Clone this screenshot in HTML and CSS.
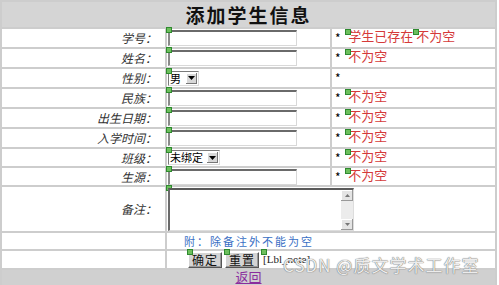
FILE: index.html
```html
<!DOCTYPE html>
<html>
<head>
<meta charset="utf-8">
<link rel="stylesheet" href="styles.css">
</head>
<body>
<div class="page">
<table class="form">
  <tr class="r-title"><td colspan="3" class="title">添加学生信息</td></tr>
  <tr class="r"><td class="lbl">学号：</td><td class="fld"><span class="wrap"><i class="mk"></i><span class="txt"></span></span></td><td class="msg">* <span class="err"><i class="mk2"></i>学生已存在<i class="mk2"></i>不为空</span></td></tr>
  <tr class="r"><td class="lbl">姓名：</td><td class="fld"><span class="wrap"><i class="mk"></i><span class="txt"></span></span></td><td class="msg">* <span class="err"><i class="mk2"></i>不为空</span></td></tr>
  <tr class="r"><td class="lbl">性别：</td><td class="fld"><span class="wrap"><i class="mk"></i><span class="sel sel-s"><span class="sv">男</span><span class="arr"><svg width="7" height="4" viewBox="0 0 7 4"><path d="M0 0h7L3.5 4z" fill="#000"/></svg></span></span></span></td><td class="msg">*</td></tr>
  <tr class="r"><td class="lbl">民族：</td><td class="fld"><span class="wrap"><i class="mk"></i><span class="txt"></span></span></td><td class="msg">* <span class="err"><i class="mk2"></i>不为空</span></td></tr>
  <tr class="r"><td class="lbl">出生日期：</td><td class="fld"><span class="wrap"><i class="mk"></i><span class="txt"></span></span></td><td class="msg">* <span class="err"><i class="mk2"></i>不为空</span></td></tr>
  <tr class="r"><td class="lbl">入学时间：</td><td class="fld"><span class="wrap"><i class="mk"></i><span class="txt"></span></span></td><td class="msg">* <span class="err"><i class="mk2"></i>不为空</span></td></tr>
  <tr class="r r-s"><td class="lbl">班级：</td><td class="fld"><span class="wrap"><i class="mk"></i><span class="sel sel-l"><span class="sv">未绑定</span><span class="arr"><svg width="7" height="4" viewBox="0 0 7 4"><path d="M0 0h7L3.5 4z" fill="#000"/></svg></span></span></span></td><td class="msg">* <span class="err"><i class="mk2"></i>不为空</span></td></tr>
  <tr class="r r-s"><td class="lbl">生源：</td><td class="fld"><span class="wrap"><i class="mk"></i><span class="txt"></span></span></td><td class="msg">* <span class="err"><i class="mk2"></i>不为空</span></td></tr>
  <tr class="r-area"><td class="lbl">备注：</td><td colspan="2" class="fld"><span class="wrap"><i class="mk"></i><span class="area"><span class="sb"><span class="sbtn"><svg width="5" height="3" viewBox="0 0 5 3"><path d="M0 3h5L2.5 0z" fill="#777"/></svg></span><span class="strack"></span><span class="sbtn"><svg width="5" height="3" viewBox="0 0 5 3"><path d="M0 0h5L2.5 3z" fill="#777"/></svg></span></span></span></span></td></tr>
  <tr class="r-note"><td></td><td colspan="2" class="note">附：除备注外不能为空</td></tr>
  <tr class="r-btn"><td></td><td colspan="2" class="btns"><span class="wrap"><i class="mk"></i><span class="btn">确定</span></span><span class="wrap"><i class="mk"></i><span class="btn">重置</span></span><span class="wrap"><i class="mk"></i><span class="lblnote">[Lbl_note]</span></span></td></tr>
  <tr class="r-back"><td colspan="3" class="back"><a class="lnk">返回</a></td></tr>
</table>
<div class="wm">CSDN @质文学术工作室</div>
</div>
</body>
</html>
```
FILE: styles.css
```css
html, body { margin: 0; padding: 0; background: #fff; }
.page { position: relative; width: 499px; height: 285px; overflow: hidden; font-family: "Noto Sans CJK SC", sans-serif; }
.form { width: 497px; border-collapse: separate; border-spacing: 2px; background: #cdcdcd; table-layout: fixed; }
.form td { padding: 0; background: #fff; vertical-align: middle; font-size: 12px; line-height: 12px; overflow: visible; }
.r-title td.title { background: #d5d5d5; height: 25px; text-align: center; font-family: "Noto Sans CJK SC", serif; font-weight: bold; font-size: 19px; line-height: 25px; color: #111; letter-spacing: 2px; }
.r td { height: 18px; }
.r-s td { height: 17px; }
.r-area td { height: 44px; }
.r-note td { height: 16px; }
.r-btn td { height: 17px; }
.r-back td.back { background: #d0d0d0; height: 16px; text-align: center; vertical-align: top; }
.lbl { text-align: right; font-style: italic; color: #333; padding-right: 8px !important; box-sizing: border-box; }
.form tr td:first-child { width: 160px; }
.fld { width: 167px; font-size: 0 !important; line-height: 0 !important; }
.wrap { position: relative; display: inline-block; vertical-align: middle; }
.mk { position: absolute; left: -1px; top: -3px; width: 4px; height: 4px; background: #6cbf5c; border: 1px solid #2f8a2f; }
.mk2 { display: inline-block; position: relative; width: 3px; height: 0; vertical-align: baseline; }
.mk2::before { content: ""; position: absolute; left: 0; top: -12px; width: 4px; height: 4px; background: #6cbf5c; border: 1px solid #2f8a2f; }
.txt { display: block; margin-left: 1px; width: 126px; height: 13px; border-top: 2px solid #6a6a6a; border-left: 2px solid #8a8a8a; border-right: 1px solid #d8d8d8; border-bottom: 1px solid #d8d8d8; background: #fff; }
.sel { display: flex; margin-left: 1px; height: 13px; border: 1px solid #7a7a7a; border-right-color: #ddd; border-bottom-color: #ddd; background: #fff; font-size: 11px; line-height: 13px; color: #000; }
.sel-s { width: 29px; }
.sel-l { width: 50px; }
.sv { flex: 1; padding-left: 1px; white-space: nowrap; }
.arr { width: 11px; height: 11px; margin: 1px; background: #d8d8d8; box-shadow: inset -1px -1px #777, inset 1px 1px #fff; display: flex; align-items: center; justify-content: center; box-sizing: border-box; flex: none; }
.msg { color: #000; padding-left: 3px !important; white-space: nowrap; }
.err { color: #d53a3a; font-size: 13px; line-height: 12px; margin-left: 2px; position: relative; top: -2px; }
.area { display: block; margin-left: 1px; width: 183px; height: 40px; border-top: 2px solid #5a5a5a; border-left: 2px solid #6a6a6a; border-right: 1px solid #ddd; border-bottom: 1px solid #ddd; background: #fff; position: relative; }
.sb { position: absolute; right: 0; top: 0; bottom: 0; width: 12px; display: flex; flex-direction: column; background: #eaeaea; }
.sbtn { height: 11px; background: #e4e4e4; box-shadow: inset -1px -1px #999, inset 1px 1px #fff; display: flex; align-items: center; justify-content: center; }
.strack { flex: 1; background: #ececec; }
.note { color: #3a6fc4; font-size: 11px !important; letter-spacing: 2px; padding-left: 17px !important; }
.btns { padding-left: 21px !important; font-size: 0 !important; line-height: 0 !important; white-space: nowrap; }
.btns .wrap { margin-right: 3px; }
.btn { display: block; height: 16px; padding: 0; background: #d4d4d4; border: 1px solid; border-color: #fff #555 #555 #fff; box-shadow: inset -1px -1px #999; font-size: 12px; line-height: 14px; color: #111; box-sizing: border-box; width: 34px; text-align: center; letter-spacing: 1px; }
.lblnote { display: block; font-family: "Liberation Serif", serif; font-size: 11px; line-height: 15px; color: #222; padding-left: 1px; }
.lnk { color: #8a2c9e; text-decoration: underline; font-size: 13px; line-height: 14px; }
.wm { position: absolute; left: 283px; top: 255px; font-family: "Noto Sans CJK SC", sans-serif; font-size: 17px; line-height: 20px; color: #ececec; letter-spacing: 1px; text-shadow: 0 0 1px #666, 0 0 1px #888; white-space: nowrap; }
```
